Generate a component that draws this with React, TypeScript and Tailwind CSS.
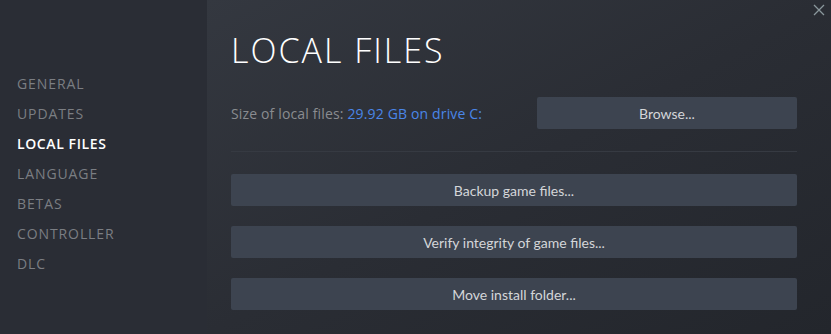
import React from 'react';

const navItems = ['GENERAL', 'UPDATES', 'LOCAL FILES', 'LANGUAGE', 'BETAS', 'CONTROLLER', 'DLC'];

const ActionButton = ({ label }: { label: string }) => (
  <button className="flex h-8 w-full items-center justify-center rounded-[2px] bg-[#3d4450] font-['Lato',sans-serif] text-[14px] text-[#d4d6d9]">
    {label}
  </button>
);

const App = () => {
  return (
    <div className="flex h-[334px] w-[831px] overflow-hidden font-['Open_Sans',sans-serif]">
      {/* sidebar */}
      <div className="flex w-[207px] shrink-0 flex-col bg-[#2a2d35] pl-[17px] pt-[73px]">
        {navItems.map((item) => (
          <div
            key={item}
            className={
              item === 'LOCAL FILES'
                ? 'h-[30px] text-[14px] font-semibold leading-[22px] tracking-[0.6px] text-white'
                : 'h-[30px] text-[14px] leading-[22px] tracking-[0.9px] text-[#7b7e83]'
            }
          >
            {item}
          </div>
        ))}
      </div>

      {/* main */}
      <div className="relative flex-1 bg-gradient-to-br from-[#343840] via-[#2a2d34] to-[#23262c] pl-[24px] pr-[34px]">
        <button className="absolute right-[6px] top-[4px] text-[#8a979c]">
          <svg width="12" height="12" viewBox="0 0 12 12">
            <path d="M1 1L11 11M11 1L1 11" stroke="currentColor" strokeWidth="1.3" />
          </svg>
        </button>

        <h1 className="mt-[31px] text-[34px] font-light leading-[38px] tracking-[2px] text-white">LOCAL FILES</h1>

        <div className="mt-[28px] flex items-center justify-between">
          <div className="text-[14px] tracking-[0.15px] text-[#8a8c90]">
            Size of local files: <span className="text-[#4a86e8]">29.92 GB on drive C:</span>
          </div>
          <button className="flex h-8 w-[260px] items-center justify-center rounded-[2px] bg-[#3d4450] font-['Lato',sans-serif] text-[14px] text-[#d4d6d9]">
            Browse...
          </button>
        </div>

        <div className="mt-[22px] h-px bg-[#363a42]" />

        <div className="mt-[22px] flex flex-col gap-5">
          <ActionButton label="Backup game files..." />
          <ActionButton label="Verify integrity of game files..." />
          <ActionButton label="Move install folder..." />
        </div>
      </div>
    </div>
  );
};

export default App;
